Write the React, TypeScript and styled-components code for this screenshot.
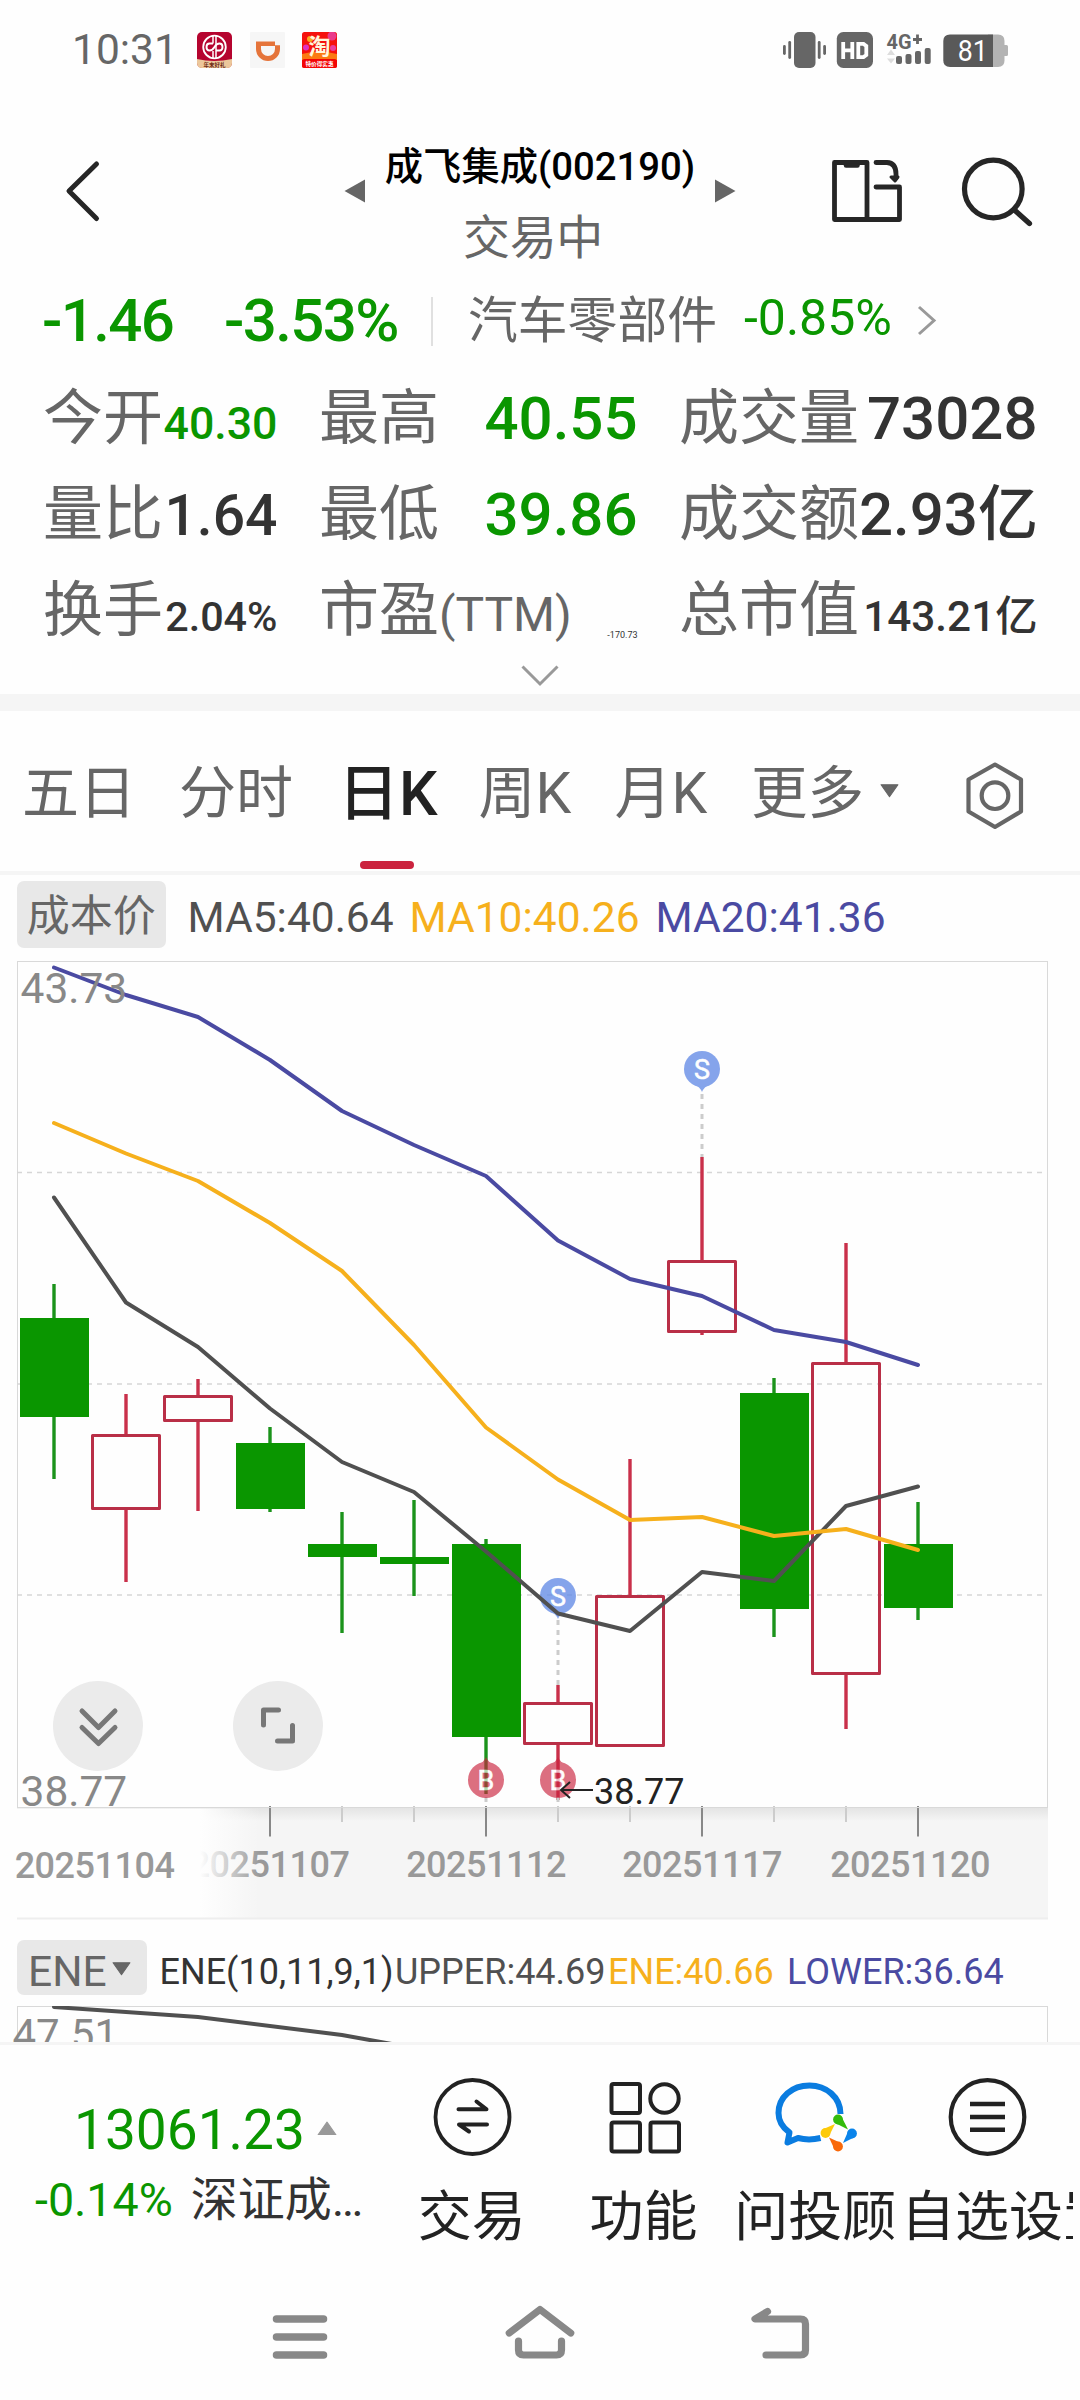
import React from "react";
import styled, { createGlobalStyle } from "styled-components";

const GREEN = "#0a9600";
const RED = "#b92f47";
const MA5 = "#505050";
const MA10 = "#f6b01c";
const MA20 = "#4a4aa2";

const Global = createGlobalStyle`
  * { box-sizing: border-box; }
  body { margin: 0; background: #fefefe; }
`;

const Screen = styled.div`
  width: 1080px;
  height: 2400px;
  display: flex;
  flex-direction: column;
  overflow: hidden;
  background: #fefefe;
  color: #666;
  font-family: Roboto, "Noto Sans CJK SC", sans-serif;
  white-space: nowrap;
  svg { display: block; flex: none; }
`;

/* ---------- status bar ---------- */
const StatusBar = styled.div`
  height: 100px;
  padding: 0 72px 0 72px;
  display: flex;
  align-items: center;
  justify-content: space-between;
`;
const StatusSide = styled.div`
  display: flex;
  align-items: center;
`;
const Clock = styled.span`
  width: 125px;
  font-size: 42.5px;
  line-height: 98px;
`;
const AppIcons = styled.div`
  display: flex;
  gap: 17.5px;
`;

/* ---------- title bar ---------- */
const TitleBar = styled.header`
  height: 180px;
  padding: 0 46px 0 62px;
  display: grid;
  grid-template-columns: 282px 392px 1fr;
`;
const BackSlot = styled.div`
  padding-top: 58px;
`;
const TitleSlot = styled.div`
  display: flex;
  justify-content: space-between;
`;
const ArrowSlot = styled.div`
  padding-top: 79px;
`;
const TitleStack = styled.div`
  flex: 1;
  display: flex;
  flex-direction: column;
  align-items: center;
`;
const StockName = styled.h1`
  margin: 44px 0 0;
  font-size: 38.3px;
  line-height: 46px;
  font-weight: 500;
  color: #000;
`;
const Session = styled.span`
  margin-top: 20px;
  margin-left: -14px;
  font-size: 47px;
  line-height: 56px;
  letter-spacing: -0.3px;
`;
const HeaderActions = styled.div`
  padding: 56px 0 0 94px;
  display: flex;
  gap: 56px;
`;

/* ---------- quote ---------- */
const ChangeRow = styled.div`
  height: 82px;
  margin-bottom: 9px;
  padding-left: 42px;
  display: flex;
  align-items: center;
`;
const Change = styled.span<{ $width: number }>`
  width: ${(p) => p.$width}px;
  font-size: 60px;
  line-height: 82px;
  font-weight: 500;
  letter-spacing: -1.6px;
  color: ${GREEN};
`;
const Divider = styled.i`
  width: 2px;
  height: 49px;
  margin: 0 35px 0 0;
  background: #e0e0e0;
`;
const Sector = styled.span`
  width: 276px;
  font-size: 49.8px;
  line-height: 84px;
`;
const SectorChange = styled.span`
  width: 173px;
  padding-bottom: 6px;
  font-size: 50px;
  line-height: 76px;
  color: ${GREEN};
`;
const QuoteGrid = styled.div`
  padding: 0 41px 0 43px;
  display: grid;
  grid-template-columns: 236px 320px 360px;
  column-gap: 40px;
  grid-auto-rows: 96px;
`;
const QuoteCell = styled.div`
  padding-right: 1.5px;
  display: flex;
  align-items: baseline;
  justify-content: space-between;
`;
const QuoteLabel = styled.span`
  font-size: 60px;
  line-height: 96px;
  small { font-size: 48px; }
`;
const QuoteValue = styled.span<{ $size: number; $green?: boolean; $tiny?: boolean }>`
  font-size: ${(p) => p.$size}px;
  line-height: 1;
  font-weight: ${(p) => (p.$tiny ? 400 : 500)};
  color: ${(p) => (p.$green ? GREEN : "#333")};
  ${(p) => p.$tiny && "position: relative; top: 7px;"}
`;
const Expand = styled.div`
  height: 35px;
  padding-top: 6px;
  display: flex;
  justify-content: center;
`;
const Gap = styled.div`
  height: 17px;
  background: #f5f5f5;
`;

/* ---------- tabs ---------- */
const Tabs = styled.nav`
  height: 164px;
  padding: 0 0 0 22px;
  display: grid;
  grid-template-columns: 157px 159px 140.5px 136px 136.5px 214px 1fr;
  border-bottom: 4px solid #f5f5f5;
`;
const Tab = styled.div<{ $active?: boolean }>`
  display: flex;
  flex-direction: column;
  font-size: ${(p) => (p.$active ? 61 : 57)}px;
  font-weight: ${(p) => (p.$active ? 500 : 400)};
  color: ${(p) => (p.$active ? "#222" : "#666")};
  line-height: 150px;
  padding-top: 8px;
  height: 158px;
`;
const ActiveBar = styled.i`
  width: 54px;
  height: 8px;
  margin: -8px 0 0 22px;
  flex: none;
  border-radius: 4px;
  background: #cb233e;
`;
const MoreTab = styled.div`
  display: flex;
  align-items: flex-start;
  gap: 16px;
  font-size: 56.5px;
  line-height: 150px;
  height: 158px;
  padding-top: 8px;
  svg { margin-top: 65px; }
`;
const SettingsSlot = styled.div`
  padding-top: 50px;
`;

/* ---------- chart legends ---------- */
const Legend = styled.div`
  height: 86px;
  padding: 6px 0 0 17px;
  display: flex;
  align-items: flex-start;
`;
const CostBadge = styled.span`
  width: 148.5px;
  height: 67px;
  margin-right: 22px;
  border-radius: 7px;
  background: #e8e8e8;
  text-align: center;
  font-size: 43px;
  line-height: 70px;
`;
const MaItem = styled.span<{ $color: string; $width: number }>`
  width: ${(p) => p.$width}px;
  font-size: 42.5px;
  line-height: 73px;
  color: ${(p) => p.$color};
`;
const IndicatorRow = styled.div`
  height: 86px;
  padding: 20px 0 0 17px;
  display: flex;
  align-items: flex-start;
`;
const IndicatorBadge = styled.span`
  width: 130px;
  height: 55px;
  margin-right: 12.5px;
  padding: 9px 0 0 11px;
  display: flex;
  align-items: center;
  gap: 5px;
  border-radius: 7px;
  background: #e8e8e8;
  font-size: 42.5px;
  line-height: 46px;
  svg { margin-top: -7px; }
`;
const IndicatorItem = styled.span<{ $color: string; $width: number }>`
  width: ${(p) => p.$width}px;
  font-size: 36px;
  line-height: 64px;
  color: ${(p) => p.$color};
`;

const ChartArea = styled.div`
  position: relative;
  height: 959px;
`;
const RoundButton = styled.button<{ $left: number }>`
  position: absolute;
  left: ${(p) => p.$left}px;
  top: 720px;
  width: 90px;
  height: 90px;
  padding: 0;
  border: 0;
  border-radius: 50%;
  background: #ebebeb;
`;
const SubChart = styled.div`
  height: 36px;
  overflow: hidden;
`;

/* ---------- footer ---------- */
const Footer = styled.footer`
  height: 218px;
  display: grid;
  grid-template-columns: 386px repeat(4, 171.7px);
  border-top: 3px solid #f5f5f5;
`;
const IndexBlock = styled.div`
  padding: 55px 0 0 35px;
`;
const IndexValue = styled.div`
  display: flex;
  align-items: center;
  gap: 12px;
  padding-left: 39px;
  height: 60px;
  font-size: 55px;
  line-height: 60px;
  color: ${GREEN};
  svg { margin-top: -4px; }
`;
const IndexDetail = styled.div`
  margin-top: 10px;
  display: flex;
  gap: 18px;
  height: 60px;
  font-size: 47px;
  line-height: 60px;
  color: #333;
`;
const Falling = styled.span`
  font-size: 46.6px;
  color: ${GREEN};
`;
const FooterItem = styled.div<{ $clip?: boolean }>`
  overflow: ${(p) => (p.$clip ? "hidden" : "visible")};
  padding-top: 32px;
  display: flex;
  flex-direction: column;
  align-items: center;
  color: #222;
`;
const FooterLabel = styled.span`
  min-width: 100%;
  align-self: flex-start;
  margin-top: 21px;
  font-size: 54px;
  line-height: 80px;
  text-align: center;
`;
const SystemNav = styled.div`
  height: 140px;
  padding: 40px 264px 0;
  display: flex;
  justify-content: space-between;
`;

/* ---------- chart data (canvas units) ---------- */
type Candle = [up: boolean, high: number, top: number, bottom: number, low: number];
const candles: Candle[] = [
  [false, 1284, 1318, 1417, 1479],
  [true, 1394, 1434, 1510, 1582],
  [true, 1379, 1395, 1422, 1511],
  [false, 1427, 1443, 1509, 1512],
  [false, 1512, 1544, 1557, 1633],
  [false, 1500, 1557, 1564, 1596],
  [false, 1539, 1544, 1737, 1794],
  [true, 1685, 1702, 1745, 1800],
  [true, 1459, 1595, 1747, 1747],
  [true, 1157, 1260, 1333, 1335],
  [false, 1378, 1393, 1609, 1637],
  [true, 1243, 1362, 1675, 1729],
  [false, 1502, 1544, 1608, 1620],
];
const ma5 = [1197.5, 1302.5, 1347, 1408.5, 1462, 1492, 1551.5, 1613.5, 1631, 1572, 1581, 1506, 1486.5];
const ma10 = [1123, 1153.5, 1181, 1223, 1271, 1345, 1427.5, 1479.5, 1520, 1517, 1536, 1529, 1550];
const ma20 = [967.5, 995, 1017, 1060, 1111, 1145, 1176, 1240.5, 1279, 1296, 1330, 1342, 1365];
const xAt = (i: number) => 54 + i * 72;
const toPoints = (ys: number[]) => ys.map((y, i) => `${xAt(i)},${y}`).join(" ");

const CandleShape = ({ c, i }: { c: Candle; i: number }) => {
  const [up, high, top, bottom, low] = c;
  const x = xAt(i);
  const color = up ? RED : GREEN;
  return (
    <g>
      <path d={`M${x} ${high}V${up ? top : low}${up ? `M${x} ${bottom}V${low}` : ""}`} stroke={up ? "#c9304a" : "#1b931b"} strokeWidth={3.4} />
      {up ? (
        <rect x={x - 33.5} y={top + 1.5} width={67} height={bottom - top - 3} fill="none" stroke={color} strokeWidth={3} strokeLinejoin="round" />
      ) : (
        <rect x={x - 34} y={top} width={69} height={bottom - top} fill={color} />
      )}
    </g>
  );
};

const Marker = ({ x, y, kind }: { x: number; y: number; kind: "S" | "B" }) => {
  const d = kind === "S" ? 1 : -1;
  const color = kind === "S" ? "#6089e6" : "#cb233e";
  return (
    <g opacity={kind === "S" ? 0.76 : 0.65}>
      <path d={`M${x - 8} ${y + 15 * d}Q${x - 2} ${y + 18 * d} ${x} ${y + 23 * d}Q${x + 2} ${y + 18 * d} ${x + 8} ${y + 15 * d}Z`} fill={color} />
      <circle cx={x} cy={y} r={18} fill={color} />
      <text x={x} y={y + 9.5} textAnchor="middle" fontSize={27} fill="#fff" stroke="#fff" strokeWidth={0.5}>{kind}</text>
    </g>
  );
};

const MainChart = () => (
  <svg width={1080} height={959} viewBox="0 961 1080 959" fontFamily='Roboto, "Noto Sans CJK SC", sans-serif'>
    <defs>
      <linearGradient id="axisFade" x1="200" x2="260" y1="0" y2="0" gradientUnits="userSpaceOnUse">
        <stop offset="0" stopColor="#fefefe" />
        <stop offset="1" stopColor="#fefefe" stopOpacity="0" />
      </linearGradient>
      <linearGradient id="axisShade" x1="0" x2="0" y1="0" y2="1">
        <stop offset="0" stopColor="#e4e4e4" />
        <stop offset="1" stopColor="#f5f5f5" />
      </linearGradient>
    </defs>
    <rect x={17} y={1808} width={1031} height={111} fill="#f5f5f5" />
    <rect x={17} y={1808} width={1031} height={13} fill="url(#axisShade)" />
    {[3, 4, 5, 6, 7, 8, 9, 10, 11, 12].map((i) => (
      <path key={i} d={`M${xAt(i)} 1806V${i % 3 ? 1822 : 1836.5}`} stroke={i % 3 ? "#ccc" : "#888"} strokeWidth={2} />
    ))}
    <g fontSize={36} fontWeight={500} fill="#999" textAnchor="middle" letterSpacing={-0.5}>
      <text x={269.5} y={1877}>20251107</text>
      <text x={486} y={1877}>20251112</text>
      <text x={702} y={1877}>20251117</text>
      <text x={910} y={1877}>20251120</text>
      <rect x={0} y={1808.5} width={260} height={111} fill="url(#axisFade)" />
      <text x={94.5} y={1878}>20251104</text>
    </g>
    <path d="M17 1918.5H1048" stroke="#eeeeee" strokeWidth={2} />

    <rect x={17.5} y={961.5} width={1030} height={846} fill="none" stroke="#d9d9d9" />
    <path d="M17 1172.5H1047M17 1384H1047M17 1595H1047" stroke="#d6d6d6" strokeWidth={1.6} strokeDasharray="5 5" />
    {candles.map((c, i) => <CandleShape key={i} c={c} i={i} />)}
    <path d="M702 1094V1157M558 1620V1685M558 1797V1806M486 1797V1806" stroke="#ccc" strokeWidth={3} strokeDasharray="5 5" />
    <Marker x={702} y={1069} kind="S" />
    <Marker x={558} y={1596} kind="S" />
    <Marker x={486} y={1780} kind="B" />
    <Marker x={558} y={1780} kind="B" />
    <g fill="none" strokeWidth={4} strokeLinecap="round" strokeLinejoin="round">
      <polyline points={toPoints(ma5)} stroke={MA5} />
      <polyline points={toPoints(ma10)} stroke={MA10} />
      <polyline points={toPoints(ma20)} stroke={MA20} />
    </g>
    <g fontSize={42.5} fill="#888">
      <text x={20.5} y={1003}>43.73</text>
      <text x={20.5} y={1805.5}>38.77</text>
    </g>
    <path d="M593 1790H561M570 1782L561 1790L570 1798" fill="none" stroke="#222" strokeWidth={2} />
    <text x={594} y={1803.5} fontSize={36} fill="#222">38.77</text>
  </svg>
);

const Caret = ({ w = 19, h = 14, up, color = "#666" }: { w?: number; h?: number; up?: boolean; color?: string }) => (
  <svg width={w} height={h} viewBox="0 0 18 13">
    <path d={up ? "M1 12.5L9 1L17 12.5Z" : "M1 0.5H17L9 12Z"} fill={color} stroke={color} strokeLinejoin="round" />
  </svg>
);

const Drop = ({ cx, cy, tx, ty, color }: { cx: number; cy: number; tx: number; ty: number; color: string }) => {
  const len = Math.hypot(tx - cx, ty - cy);
  const nx = (-(ty - cy) / len) * 4.7;
  const ny = ((tx - cx) / len) * 4.7;
  return (
    <g fill={color}>
      <circle cx={cx} cy={cy} r={4.9} />
      <path d={`M${cx + nx} ${cy + ny}L${tx} ${ty}L${cx - nx} ${cy - ny}Z`} />
    </g>
  );
};

const quotes: { label: React.ReactNode; value: string; size: number; green?: boolean; tiny?: boolean }[] = [
  { label: "今开", value: "40.30", size: 44.7, green: true },
  { label: "最高", value: "40.55", size: 60, green: true },
  { label: "成交量", value: "73028", size: 60 },
  { label: "量比", value: "1.64", size: 57 },
  { label: "最低", value: "39.86", size: 60, green: true },
  { label: "成交额", value: "2.93亿", size: 60 },
  { label: "换手", value: "2.04%", size: 41.3 },
  { label: <>市盈<small>(TTM)</small></>, value: "-170.73", size: 9, tiny: true },
  { label: "总市值", value: "143.21亿", size: 42.3 },
];

export default function App() {
  return (
    <Screen>
      <Global />
      <StatusBar>
        <StatusSide>
          <Clock>10:31</Clock>
          <AppIcons>
            <svg width="35" height="36" viewBox="0 0 35 36">
              <rect width="35" height="36" rx="5" fill="#b5042f" />
              <path d="M0 27Q17 31 35 27V31Q35 36 30 36H5Q0 36 0 31Z" fill="#ecc79b" />
              <circle cx="17.5" cy="15" r="11.3" fill="none" stroke="#fff" strokeWidth="1.8" />
              <path d="M16 4V11.5M19 4V26M16 19V26" stroke="#fff" strokeWidth="1.5" />
              <path d="M16 11.5H12.5Q9.5 11.5 9.5 15T12.5 18.5Q15.5 18.5 17.5 15T22.5 11.5Q25.500 11.5 25.5 15T22.5 18.5H19" fill="none" stroke="#fff" strokeWidth="1.9" />
              <text x="17.5" y="34.5" textAnchor="middle" fontSize="5.5" fontWeight="700" fill="#6e2b14">年末好礼</text>
            </svg>
            <svg width="35" height="36" viewBox="0 0 35 36">
              <rect width="35" height="36" rx="1" fill="#f6f6f6" />
              <path d="M6 9.5H25V13.3H30V17A12 12 0 0 1 6 17ZM11 14V17A7 7 0 0 0 25 17V14Z" fill="#e5743a" fillRule="evenodd" />
            </svg>
            <svg width="35" height="36" viewBox="0 0 35 36">
              <rect width="35" height="36" rx="2.5" fill="#f5120d" />
              <circle cx="30" cy="4" r="4.5" fill="#ea3b8b" />
              <circle cx="8" cy="7" r="3" fill="#f8ab20" />
              <circle cx="4" cy="15.5" r="3" fill="#e02fc0" />
              <circle cx="31" cy="16" r="3" fill="#e93fa0" />
              <path d="M0 22Q17 17 35 22V28H0Z" fill="#fb7a12" />
              <rect y="27" width="35" height="9" rx="2.5" fill="#f30505" />
              <text x="17.5" y="21.5" textAnchor="middle" fontSize="22" fontWeight="700" fill="#fff6dc">淘</text>
              <text x="17.5" y="34" textAnchor="middle" fontSize="5.6" fontWeight="700" fill="#fff">特价得实惠</text>
            </svg>
          </AppIcons>
        </StatusSide>
        <StatusSide>
          <svg width="225" height="40" viewBox="783 31 225 40">
            <g fill="#666">
              <rect x="794" y="33" width="21.5" height="36" rx="5" />
              <rect x="783" y="46" width="2.8" height="10" rx="1.4" />
              <rect x="788.3" y="42" width="2.8" height="18" rx="1.4" />
              <rect x="817.8" y="42" width="2.8" height="18" rx="1.4" />
              <rect x="823.2" y="46" width="2.8" height="10" rx="1.4" />
              <rect x="836.8" y="33" width="36.2" height="36" rx="6.5" />
              <rect x="896" y="57" width="6" height="8" rx="2" />
              <rect x="905.5" y="55" width="6" height="10" rx="2" />
              <rect x="915" y="52" width="6" height="13" rx="2" />
              <rect x="924.7" y="49" width="6" height="16" rx="2" />
              <text x="886.500" y="49.8" fontSize="20.5" fontWeight="700" textLength="25" lengthAdjust="spacingAndGlyphs">4G</text>
              <path d="M913 40.5H922M917.500 35.500V45" stroke="#666" strokeWidth="2.8" />
            </g>
            <g fill="none" stroke="#fff" strokeWidth="3.8">
              <path d="M843.2 43V60M852.3 43V60M843.2 51.3H852.3" />
              <path d="M858.3 44.900H863.5L866.300 47V56L863.500 58.100H858.3Z" />
            </g>
            <path d="M887 56L891 50.5L895 56ZM887 59.5L891 64.5L895 59.5Z" fill="#ddd" />
            <path d="M988 35.5H998Q1004.500 35.5 1004.5 42V46H1006.5Q1008 46 1008 47.5V55.5Q1008 57 1006.5 57H1004.5V61.5Q1004.5 68 998 68H988Z" fill="#b3b3b3" />
            <path d="M993 35.5H950Q943.3 35.5 943.3 42V61.5Q943.3 68 950 68H993Z" fill="#595959" />
            <text x="972.800" y="62" fontSize="29" textAnchor="middle" fill="#fff" textLength="30" lengthAdjust="spacingAndGlyphs">81</text>
          </svg>
        </StatusSide>
      </StatusBar>

      <TitleBar>
        <BackSlot>
          <svg width="40" height="66" viewBox="0 0 40 66" fill="none" stroke="#262626" strokeWidth="5" strokeLinecap="round" strokeLinejoin="round">
            <path d="M34.5 6L7 33L34.5 60.5" />
          </svg>
        </BackSlot>
        <TitleSlot>
          <ArrowSlot>
            <svg width="21" height="24" viewBox="0 0 21 24"><path d="M0.5 12L21 0.5V23.5Z" fill="#666" /></svg>
          </ArrowSlot>
          <TitleStack>
            <StockName>成飞集成(002190)</StockName>
            <Session>交易中</Session>
          </TitleStack>
          <ArrowSlot>
            <svg width="21" height="24" viewBox="0 0 21 24"><path d="M20.5 12L0 0.5V23.5Z" fill="#666" /></svg>
          </ArrowSlot>
        </TitleSlot>
        <HeaderActions>
          <svg width="74" height="70" viewBox="830 156 74 70" fill="none" stroke="#262626" strokeWidth="4.800" strokeLinecap="round" strokeLinejoin="round">
            <path d="M834.5 162.5H867V219.5H834.5ZM867 219.5H899.5V187H876" />
            <path d="M846 165.5H857.5" strokeWidth="4.5" />
            <path d="M876 162.5H887Q896 163 896 174V178" />
            <path d="M891 177L895 181L898 177Z" fill="#262626" strokeWidth="3" />
          </svg>
          <svg width="74" height="72" viewBox="960 156 74 72" fill="none" stroke="#262626" strokeWidth="5.2" strokeLinecap="round">
            <circle cx="993.300" cy="189" r="28.8" />
            <path d="M1015 210.500L1029.500 223.500" />
          </svg>
        </HeaderActions>
      </TitleBar>

      <ChangeRow>
        <Change $width={182}>-1.46</Change>
        <Change $width={207}>-3.53%</Change>
        <Divider />
        <Sector>汽车零部件</Sector>
        <SectorChange>-0.85%</SectorChange>
        <svg width="20" height="32" viewBox="0 0 20 32" fill="none" stroke="#999" strokeWidth="3"><path d="M2 2L17 15.500L2 29" /></svg>
      </ChangeRow>
      <QuoteGrid>
        {quotes.map((q) => (
          <QuoteCell key={q.value}>
            <QuoteLabel>{q.label}</QuoteLabel>
            <QuoteValue $size={q.size} $green={q.green} $tiny={q.tiny}>{q.value}</QuoteValue>
          </QuoteCell>
        ))}
      </QuoteGrid>
      <Expand>
        <svg width="38" height="22" viewBox="0 0 38 22" fill="none" stroke="#999" strokeWidth="3"><path d="M1.5 1.5L19 19L36.5 1.5" /></svg>
      </Expand>
      <Gap />

      <Tabs>
        <Tab>五日</Tab>
        <Tab>分时</Tab>
        <Tab $active>日K<ActiveBar /></Tab>
        <Tab>周K</Tab>
        <Tab>月K</Tab>
        <MoreTab>更多<Caret /></MoreTab>
        <SettingsSlot>
          <svg width="60" height="70" viewBox="0 0 60 70" fill="none" stroke="#666" strokeWidth="4.2">
            <path d="M30 3.5L56 18.5V50.5L30 66L3.5 50.5V18.5Z" strokeLinejoin="round" />
            <circle cx="30" cy="34.7" r="13.3" />
          </svg>
        </SettingsSlot>
      </Tabs>

      <Legend>
        <CostBadge>成本价</CostBadge>
        <MaItem $color={MA5} $width={222}>MA5:40.64</MaItem>
        <MaItem $color={MA10} $width={246}>MA10:40.26</MaItem>
        <MaItem $color={MA20} $width={246}>MA20:41.36</MaItem>
      </Legend>
      <ChartArea>
        <MainChart />
        <RoundButton $left={53}>
          <svg width="90" height="90" viewBox="0 0 90 90" fill="none" stroke="#777" strokeWidth="5" strokeLinecap="round" strokeLinejoin="round">
            <path d="M29 30L45.5 46.500L62 30M29 46.500L45.5 62.500L62 46.500" />
          </svg>
        </RoundButton>
        <RoundButton $left={233}>
          <svg width="90" height="90" viewBox="0 0 90 90" fill="none" stroke="#777" strokeWidth="5" strokeLinecap="round" strokeLinejoin="round">
            <path d="M45.5 29H30.5V44M59.5 44.500V60H44.5" />
          </svg>
        </RoundButton>
      </ChartArea>
      <IndicatorRow>
        <IndicatorBadge>ENE<Caret /></IndicatorBadge>
        <IndicatorItem $color="#333" $width={235.5}>ENE(10,11,9,1)</IndicatorItem>
        <IndicatorItem $color={MA5} $width={213}>UPPER:44.69</IndicatorItem>
        <IndicatorItem $color={MA10} $width={179}>ENE:40.66</IndicatorItem>
        <IndicatorItem $color={MA20} $width={220}>LOWER:36.64</IndicatorItem>
      </IndicatorRow>
      <SubChart>
        <svg width="1080" height="60" viewBox="0 2006 1080 60">
          <rect x="17.5" y="2006.5" width="1030" height="90" fill="none" stroke="#d9d9d9" />
          <text x="12.5" y="2048.5" fontSize="42" fill="#888">47.51</text>
          <path d="M54 2007L198 2017L342 2035L414 2048" fill="none" stroke={MA5} strokeWidth="4" strokeLinecap="round" />
        </svg>
      </SubChart>

      <Footer>
        <IndexBlock>
          <IndexValue>13061.23<Caret w={20} h={14.5} up color="#999" /></IndexValue>
          <IndexDetail><Falling>-0.14%</Falling><span>深证成…</span></IndexDetail>
        </IndexBlock>
        <FooterItem>
          <svg width="80" height="80" viewBox="0 0 80 80" fill="none" stroke="#222" strokeWidth="3.8">
            <circle cx="40.500" cy="40" r="37" />
            <path d="M26.500 32.3H54.5L44.5 24.500M55 47.500H27L37 54.500" strokeWidth="4" strokeLinecap="round" strokeLinejoin="round" />
          </svg>
          <FooterLabel>交易</FooterLabel>
        </FooterItem>
        <FooterItem>
          <svg width="80" height="80" viewBox="0 0 80 80" fill="none" stroke="#222" strokeWidth="4">
            <rect x="7.5" y="7" width="28.5" height="29" rx="2" />
            <circle cx="60.5" cy="21.5" r="14.2" />
            <rect x="7.5" y="45.5" width="28.5" height="29" rx="2" />
            <rect x="46.5" y="45.5" width="28.5" height="29" rx="2" />
          </svg>
          <FooterLabel>功能</FooterLabel>
        </FooterItem>
        <FooterItem>
          <svg width="84" height="80" viewBox="-2 0 84 80">
            <path d="M65.5 37C65.5 20 51 8.5 34.5 8.5C17 8.5 3.5 20 3.5 36C3.500 44 7.5 50.5 14.5 55.5L12.5 65.5L23 61C30 62.8 38 62.8 45.5 61" fill="none" stroke="#0a7ce0" strokeWidth="6" strokeLinejoin="round" />
            <Drop cx={63} cy={42.5} tx={73} ty={52.5} color="#33bb0a" />
            <Drop cx={77} cy={56.5} tx={68} ty={66} color="#0a84ea" />
            <Drop cx={63} cy={69.5} tx={54} ty={60.5} color="#f9690a" />
            <Drop cx={50.5} cy={56} tx={60} ty={47} color="#fdca0a" />
          </svg>
          <FooterLabel>问投顾</FooterLabel>
        </FooterItem>
        <FooterItem $clip>
          <svg width="80" height="80" viewBox="0 0 80 80" fill="none" stroke="#222" strokeWidth="4.2">
            <circle cx="40.5" cy="40" r="36.8" />
            <path d="M23 27H58M23 40H58M23 52.700H58" strokeWidth="4.6" />
          </svg>
          <FooterLabel>自选设置</FooterLabel>
        </FooterItem>
      </Footer>

      <SystemNav>
        <svg width="72" height="70" viewBox="264 2300 72 70" fill="none" stroke="#888" strokeWidth="7.5" strokeLinecap="round">
          <path d="M276.5 2319H323.5M276.5 2337H323.5M276.5 2355H323.5" />
        </svg>
        <svg width="72" height="70" viewBox="504 2300 72 70" fill="none" stroke="#888" strokeWidth="7.2" strokeLinecap="round" strokeLinejoin="round">
          <path d="M509.3 2333L540 2309.5L570.7 2333M518.5 2341V2350Q518.5 2355 523.5 2355H556.5Q561.5 2355 561.5 2350V2341" />
        </svg>
        <svg width="72" height="70" viewBox="744 2300 72 70" fill="none" stroke="#888" strokeWidth="7.2" strokeLinecap="round" strokeLinejoin="round">
          <path d="M767.5 2311.5L755 2319H800.5Q805.5 2319 805.5 2324V2350Q805.5 2355 800.5 2355H766" />
        </svg>
      </SystemNav>
    </Screen>
  );
}
